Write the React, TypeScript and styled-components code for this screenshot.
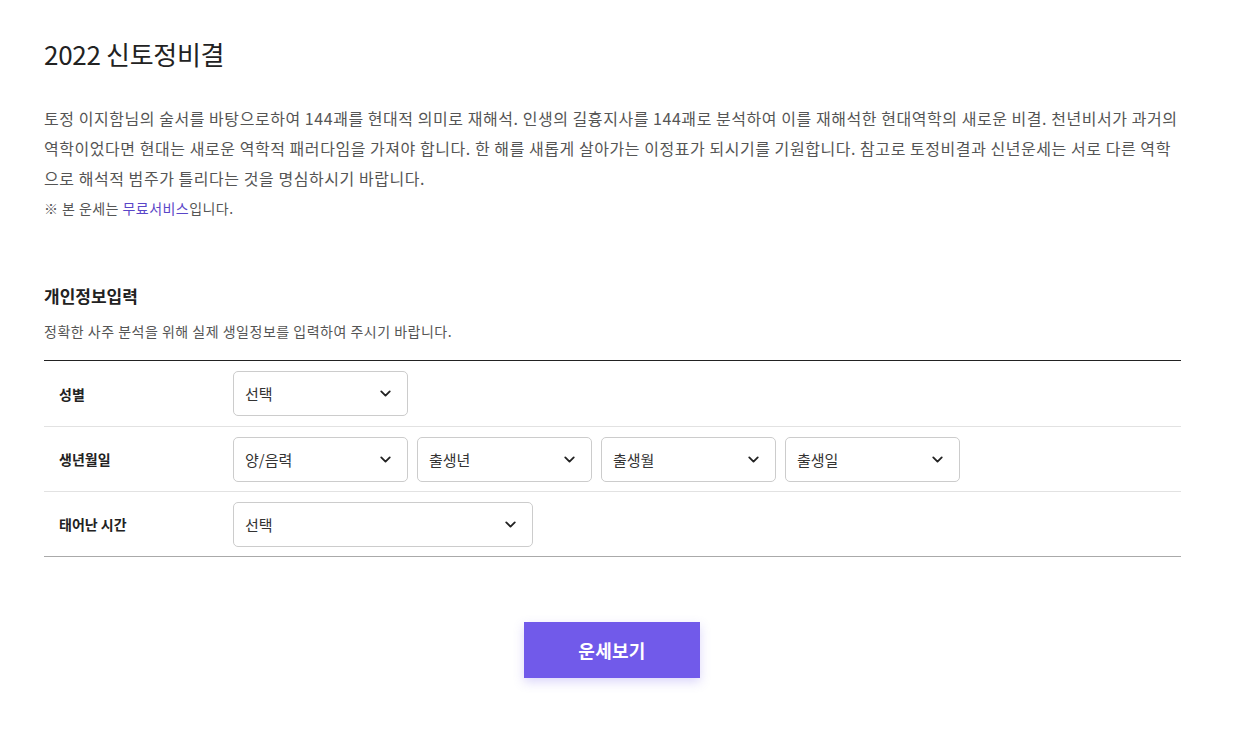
import React from "react";
import styled, { createGlobalStyle } from "styled-components";

const Global = createGlobalStyle`
  html, body { margin: 0; padding: 0; background: #fff; }
  body { font-family: "Noto Sans CJK KR", "Noto Sans", sans-serif; color: #222; }
  * { box-sizing: border-box; }
`;

const Page = styled.div`
  padding: 34px 57px 50px 44px;
  width: 1238px;
`;

const Title = styled.h1`
  margin: 0;
  font-size: 26px;
  font-weight: 400;
  line-height: 40px;
  color: #222;
  letter-spacing: -0.3px;
`;

const Desc = styled.p`
  margin: 29px 0 0;
  font-size: 16px;
  line-height: 30px;
  color: #555;
  letter-spacing: 0.55px;
`;

const Note = styled.p`
  margin: 4px 0 0;
  font-size: 14px;
  line-height: 22px;
  color: #555;
  letter-spacing: 0.45px;
`;

const Link = styled.span`
  color: #5a46c8;
`;

const SectionTitle = styled.h2`
  margin: 62px 0 0;
  font-size: 17px;
  font-weight: 700;
  line-height: 30px;
  color: #222;
`;

const SectionSub = styled.p`
  margin: 10px 0 0;
  font-size: 14px;
  line-height: 20px;
  color: #555;
  letter-spacing: 0.5px;
`;

const Table = styled.div`
  margin-top: 19px;
  border-top: 1px solid #222;
  border-bottom: 1px solid #aaa;
`;

const Row = styled.div`
  display: flex;
  align-items: center;
  height: 65px;
  & + & { border-top: 1px solid #e2e2e2; }
`;

const Label = styled.div`
  width: 189px;
  padding-left: 15px;
  font-size: 14px;
  font-weight: 700;
  color: #222;
`;

const Fields = styled.div`
  display: flex;
  gap: 9px;
`;

const Select = styled.div<{ $w: number }>`
  width: ${(p) => p.$w}px;
  height: 45px;
  border: 1px solid #ccc;
  border-radius: 5px;
  display: flex;
  align-items: center;
  justify-content: space-between;
  padding: 0 13px 0 11px;
  font-size: 15px;
  color: #333;
`;

const Chevron = () => (
  <svg width="17" height="17" viewBox="0 0 24 24" fill="none" stroke="#222" strokeWidth="2.6" strokeLinecap="round" strokeLinejoin="round">
    <path d="M6 9l6 6 6-6" />
  </svg>
);

const ButtonWrap = styled.div`
  display: flex;
  justify-content: center;
  margin-top: 65px;
  padding-right: 1px;
`;

const Button = styled.button`
  width: 176px;
  height: 56px;
  border: none;
  background: #715aea;
  color: #fff;
  font-family: inherit;
  font-size: 18px;
  font-weight: 700;
  letter-spacing: 0.3px;
  box-shadow: 0 4px 10px rgba(113, 90, 234, 0.25);
  cursor: pointer;
`;

const Field = ({ w, text }: { w: number; text: string }) => (
  <Select $w={w}>
    <span>{text}</span>
    <Chevron />
  </Select>
);

export default function App() {
  return (
    <>
      <Global />
      <Page>
        <Title>2022 신토정비결</Title>
        <Desc>
          토정 이지함님의 술서를 바탕으로하여 144괘를 현대적 의미로 재해석. 인생의 길흉지사를 144괘로 분석하여 이를 재해석한 현대역학의 새로운 비결. 천년비서가 과거의 역학이었다면 현대는 새로운 역학적 패러다임을 가져야 합니다. 한 해를 새롭게 살아가는 이정표가 되시기를 기원합니다. 참고로 토정비결과 신년운세는 서로 다른 역학으로 해석적 범주가 틀리다는 것을 명심하시기 바랍니다.
        </Desc>
        <Note>
          ※ 본 운세는 <Link>무료서비스</Link>입니다.
        </Note>
        <SectionTitle>개인정보입력</SectionTitle>
        <SectionSub>정확한 사주 분석을 위해 실제 생일정보를 입력하여 주시기 바랍니다.</SectionSub>
        <Table>
          <Row>
            <Label>성별</Label>
            <Fields>
              <Field w={175} text="선택" />
            </Fields>
          </Row>
          <Row>
            <Label>생년월일</Label>
            <Fields>
              <Field w={175} text="양/음력" />
              <Field w={175} text="출생년" />
              <Field w={175} text="출생월" />
              <Field w={175} text="출생일" />
            </Fields>
          </Row>
          <Row>
            <Label>태어난 시간</Label>
            <Fields>
              <Field w={300} text="선택" />
            </Fields>
          </Row>
        </Table>
        <ButtonWrap>
          <Button>운세보기</Button>
        </ButtonWrap>
      </Page>
    </>
  );
}
